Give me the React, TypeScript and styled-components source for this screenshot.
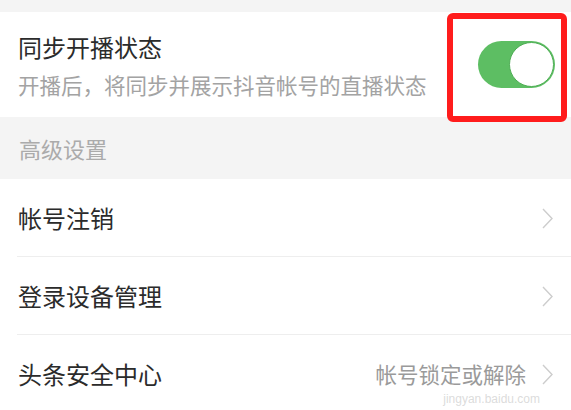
import React from "react";
import styled, { createGlobalStyle } from "styled-components";

const Global = createGlobalStyle`
  html, body { margin: 0; padding: 0; background: #f4f4f4; }
  body { font-family: "Noto Sans CJK SC", "Noto Sans", sans-serif; }
`;

const Page = styled.div`
  width: 571px;
  height: 410px;
  overflow: hidden;
  background: #f4f4f4;
  padding-top: 12px;
  box-sizing: border-box;
`;

const SyncSection = styled.section`
  position: relative;
  height: 105px;
  background: #fff;
  display: flex;
  align-items: center;
  justify-content: space-between;
  padding: 0 16px 0 18px;
  box-sizing: border-box;
`;

const TextCol = styled.div`
  display: flex;
  flex-direction: column;
  gap: 9px;
  margin-top: 2px;
`;

const Title = styled.div`
  font-size: 24px;
  line-height: 30px;
  color: #2b2b2b;
`;

const Sub = styled.div`
  font-size: 21.5px;
  line-height: 28px;
  color: #a3a3a3;
  white-space: nowrap;
`;

const Toggle = styled.div<{ $on: boolean }>`
  width: 77px;
  height: 47px;
  border-radius: 24px;
  background: ${(p) => (p.$on ? "#5dbe63" : "#e5e5e5")};
  display: flex;
  align-items: center;
  justify-content: ${(p) => (p.$on ? "flex-end" : "flex-start")};
  padding: 1px;
  box-sizing: border-box;
`;

const Knob = styled.div`
  width: 45px;
  height: 45px;
  border-radius: 50%;
  background: #fff;
  box-sizing: border-box;
  border: 1px solid #4fae55;
`;

const Highlight = styled.div`
  position: absolute;
  right: 4px;
  top: 1px;
  width: 120px;
  height: 109px;
  border: 6px solid #ff1c1c;
  border-radius: 6px;
  box-sizing: border-box;
  pointer-events: none;
`;

const GroupHeader = styled.div`
  height: 62px;
  display: flex;
  align-items: center;
  padding-left: 19px;
  font-size: 22px;
  color: #ababab;
`;

const List = styled.div`
  background: #fff;
`;

const Row = styled.div`
  position: relative;
  height: 78px;
  display: flex;
  align-items: center;
  padding: 0 18px;
  box-sizing: border-box;
  &:not(:last-child)::after {
    content: "";
    position: absolute;
    left: 17px;
    right: 0;
    bottom: 0;
    height: 1px;
    background: #eeeeee;
  }
`;

const RowLabel = styled.div`
  flex: 1;
  font-size: 24px;
  color: #2b2b2b;
  line-height: 30px;
`;

const RowValue = styled.div`
  font-size: 21.5px;
  line-height: 24px;
  color: #9a9a9a;
  margin-right: 16px;
`;

const Watermark = styled.div`
  position: absolute;
  right: 31px;
  bottom: 8px;
  font-family: "Liberation Sans", sans-serif;
  font-size: 12px;
  line-height: 12px;
  color: rgba(200, 200, 200, 0.65);
  pointer-events: none;
`;

const Chevron = () => (
  <svg width="11" height="21" viewBox="0 0 11 21" fill="none">
    <polyline points="1,1 10,10.5 1,20" stroke="#cdcdcd" strokeWidth="1.4" />
  </svg>
);

export default function App() {
  return (
    <Page>
      <Global />
      <SyncSection>
        <TextCol>
          <Title>同步开播状态</Title>
          <Sub>开播后，将同步并展示抖音帐号的直播状态</Sub>
        </TextCol>
        <Toggle $on>
          <Knob />
        </Toggle>
        <Highlight />
      </SyncSection>
      <GroupHeader>高级设置</GroupHeader>
      <List>
        <Row>
          <RowLabel>帐号注销</RowLabel>
          <Chevron />
        </Row>
        <Row>
          <RowLabel>登录设备管理</RowLabel>
          <Chevron />
        </Row>
        <Row>
          <RowLabel>头条安全中心</RowLabel>
          <RowValue>帐号锁定或解除</RowValue>
          <Chevron />
          <Watermark>jingyan.baidu.com</Watermark>
        </Row>
      </List>
    </Page>
  );
}
